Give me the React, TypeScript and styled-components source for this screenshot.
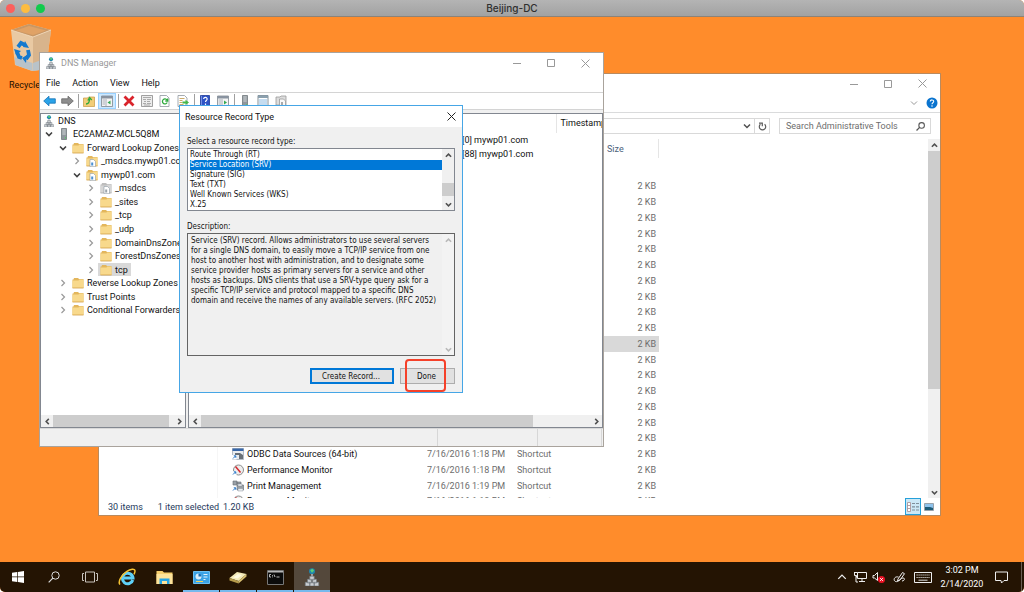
import React from "react";
import styled, { createGlobalStyle, css } from "styled-components";

const UI = 'Roboto, "Open Sans", sans-serif';
const DIALOG = '"DejaVu Sans Condensed", "DejaVu Sans", sans-serif';

const Global = createGlobalStyle`
  *, *::before, *::after { box-sizing: border-box; }
  body { margin: 0; background: #fff; font: 9px/12px ${UI}; color: #111; }
  button, input, select, textarea { font: inherit; color: inherit; margin: 0; padding: 0; }
  button { background: none; border: 0; }
  svg { display: block; flex: none; }
`;

const Screen = styled.div`
  min-height: 100vh;
  display: flex;
  flex-direction: column;
  border-radius: 5px;
  overflow: hidden;
  background: #ff8c2b;
`;

const MacBar = styled.header`
  height: 17px;
  display: grid;
  grid-template-columns: 1fr auto 1fr;
  align-items: center;
  background: linear-gradient(#b4b4b4, #a2a2a2);
  border-bottom: 1px solid #8d8378;
  font: 500 10px/14px Inter, sans-serif;
  color: #2f2f2f;
`;

const Lights = styled.div`
  display: flex;
  gap: 6px;
  padding-left: 6px;
`;

const Light = styled.button<{ $c: string }>`
  width: 9px;
  height: 9px;
  border-radius: 50%;
  background: ${(p) => p.$c};
`;

const Desktop = styled.main`
  flex: 1;
  position: relative;
  overflow: hidden;
`;

const Shortcut = styled.a`
  position: absolute;
  left: 6px;
  top: 6px;
  width: 52px;
  display: flex;
  flex-direction: column;
  align-items: center;
  gap: 6px;
  color: #1a0d00;
  text-decoration: none;
  white-space: nowrap;
`;

const Window = styled.section<{ $x: number; $y: number; $w: number; $h: number; $edge: string }>`
  position: absolute;
  left: ${(p) => p.$x}px;
  top: ${(p) => p.$y}px;
  width: ${(p) => p.$w}px;
  height: ${(p) => p.$h}px;
  display: flex;
  flex-direction: column;
  background: #fff;
  border: 1px solid ${(p) => p.$edge};
`;

const TitleBar = styled.div<{ $h: number }>`
  height: ${(p) => p.$h}px;
  flex: none;
  display: flex;
  align-items: center;
  padding: 0 1px 0 5px;
  background: #fff;
`;

const Caption = styled.h2<{ $dark?: boolean; $icon?: boolean }>`
  flex: 1;
  margin: 0;
  padding-left: ${(p) => (p.$icon ? 4 : 0)}px;
  font: inherit;
  color: ${(p) => (p.$dark ? "#111" : "#999")};
`;

const CaptionButton = styled.button<{ $w?: number }>`
  width: ${(p) => p.$w ?? 34}px;
  height: 20px;
  display: grid;
  place-items: center;
`;

/* Explorer */

const RibbonRow = styled.div`
  height: 20px;
  flex: none;
  display: flex;
  justify-content: flex-end;
  align-items: center;
  gap: 8px;
  padding-right: 2px;
  border-bottom: 1px solid #dadbdc;
`;

const AddressRow = styled.div`
  height: 26px;
  flex: none;
  display: flex;
  align-items: center;
  gap: 9px;
  padding: 0 9px;
`;

const AddressBox = styled.div`
  flex: 1;
  height: 16px;
  display: flex;
  justify-content: flex-end;
  border: 1px solid #d9d9d9;
`;

const AddressButton = styled.button<{ $line?: boolean }>`
  width: 15px;
  display: grid;
  place-items: center;
  ${(p) => p.$line && css`border-left: 1px solid #d9d9d9;`}
`;

const SearchBox = styled.label`
  width: 152px;
  height: 16px;
  display: flex;
  align-items: center;
  padding: 0 5px 0 6px;
  border: 1px solid #d9d9d9;
`;

const SearchInput = styled.input`
  flex: 1;
  min-width: 0;
  border: 0;
  outline: 0;
  background: none;
  &::placeholder { color: #6d6d6d; opacity: 1; }
`;

const ExplorerBody = styled.div`
  flex: 1;
  min-height: 0;
  display: flex;
`;

const NavPane = styled.div`
  width: 119px;
  border-right: 1px solid #f6f6f6;
`;

const FilesPane = styled.div`
  flex: 1;
  overflow: hidden;
`;

const Files = styled.table`
  width: 441px;
  border-collapse: collapse;
  table-layout: fixed;
  color: #6d6d6d;
  white-space: nowrap;
  td, th { padding: 0; text-align: left; font-weight: 400; line-height: 12px; overflow: hidden; }
  th { height: 39px; padding-bottom: 20px; color: #4c607a; }
  td:last-child { text-align: right; padding-right: 3px; }
`;

const SizeHead = styled.div`
  height: 19px;
  padding: 4px 0 0 5px;
  border-right: 1px solid #e5e5e5;
`;

const FileRow = styled.tr<{ $selected?: boolean; $h: number }>`
  height: ${(p) => p.$h}px;
  background: ${(p) => (p.$selected ? "#d9d9d9" : "none")};
`;

const FileName = styled.div`
  display: flex;
  align-items: center;
  gap: 3px;
  padding-left: 14px;
  color: #111;
`;

const ExplorerStatus = styled.footer`
  height: 17px;
  flex: none;
  display: flex;
  align-items: center;
  padding: 0 3px 0 9px;
  color: #1e395b;
`;

const StatusText = styled.span<{ $r: number }>`
  padding-right: ${(p) => p.$r}px;
`;

const ViewButton = styled.button<{ $on?: boolean }>`
  width: 16px;
  height: 17px;
  display: grid;
  place-items: center;
  ${(p) => p.$on && css`background: #cbe8f6; border: 1px solid #26a0da;`}
`;

/* Scroll bars */

const ScrollTrack = styled.div<{ $across?: boolean; $w?: number; $bg?: string }>`
  display: flex;
  flex: none;
  flex-direction: ${(p) => (p.$across ? "row" : "column")};
  ${(p) => (p.$across ? css`height: 12px;` : css`width: ${p.$w ?? 12}px;`)}
  background: ${(p) => p.$bg ?? "#f0f0f0"};
`;

const ScrollButton = styled.button`
  width: 12px;
  height: 12px;
  flex: none;
  display: grid;
  place-items: center;
`;

const Thumb = styled.div<{ $size: number }>`
  flex: 0 0 ${(p) => p.$size}px;
  background: #cdcdcd;
`;

const Gap = styled.div<{ $size?: number }>`
  flex: ${(p) => (p.$size === undefined ? "1" : `0 0 ${p.$size}px`)};
`;

/* DNS console */

const MenuBar = styled.nav`
  height: 20px;
  flex: none;
  display: flex;
  align-items: center;
  gap: 12px;
  padding-left: 6px;
  border-bottom: 1px solid #d4d4d4;
`;

const ToolBar = styled.div`
  height: 17px;
  flex: none;
  display: flex;
  align-items: center;
  border-bottom: 1px solid #d4d4d4;
`;

const ToolButton = styled.button<{ $on?: boolean }>`
  width: 18px;
  height: 16px;
  display: grid;
  place-items: center;
  ${(p) => p.$on && css`background: #cce8ff; border: 1px solid #99d1ff;`}
`;

const ToolRule = styled.span`
  width: 1px;
  height: 14px;
  margin: 0 1px 0 2px;
  background: #a0a0a0;
`;

const Panes = styled.div`
  flex: 1;
  min-height: 0;
  display: flex;
  gap: 2px;
  padding-top: 3px;
  background: #f0f0f0;
`;

const Pane = styled.div<{ $w?: number }>`
  ${(p) => (p.$w ? css`width: ${p.$w}px;` : css`flex: 1; min-width: 0;`)}
  display: flex;
  flex-direction: column;
  background: #fff;
  border: 1px solid #828790;
`;

const Tree = styled.ul`
  margin: 0;
  padding: 0;
  list-style: none;
  height: 203px;
  flex: none;
  display: flex;
  flex-direction: column;
`;

const TreeRow = styled.li<{ $depth: number }>`
  flex: 1;
  min-height: 0;
  display: flex;
  align-items: center;
  padding-left: ${(p) => p.$depth * 14}px;
  overflow: hidden;
  white-space: nowrap;
`;

const Twist = styled.button`
  width: 15px;
  height: 12px;
  flex: none;
  display: grid;
  place-items: center;
`;

const TreeItem = styled.span<{ $selected?: boolean }>`
  height: 14px;
  display: flex;
  align-items: center;
  gap: 3px;
  padding: 0 3px 0 2px;
  background: ${(p) => (p.$selected ? "#d9d9d9" : "none")};
`;

const Records = styled.table`
  width: 100%;
  border-collapse: collapse;
  table-layout: fixed;
  white-space: nowrap;
  td, th { padding: 0; height: 14px; line-height: 14px; text-align: left; font-weight: 400; overflow: hidden; }
  th { height: 19px; line-height: 19px; }
  th:last-child { padding-left: 4px; border-left: 1px solid #e5e5e5; }
  td:first-child { padding-left: 273px; }
`;

const ConsoleStatus = styled.footer`
  height: 18px;
  flex: none;
  display: flex;
  justify-content: flex-end;
  background: #f0f0f0;
  border-top: 1px solid #d9d9d9;
`;

const StatusCell = styled.span<{ $w: number }>`
  width: ${(p) => p.$w}px;
  border-left: 1px solid #d7d7d7;
`;

/* Record type dialog */

const DialogBody = styled.div`
  flex: 1;
  display: flex;
  flex-direction: column;
  padding: 9px 7px 0;
  background: #f0f0f0;
  font: 8px/12px ${DIALOG};
`;

const FieldLabel = styled.label`
  height: 12px;
`;

const ListFrame = styled.div<{ $h: number; $dark?: boolean }>`
  height: ${(p) => p.$h}px;
  display: flex;
  margin-bottom: ${(p) => (p.$dark ? 12 : 10)}px;
  border: 1px solid ${(p) => (p.$dark ? "#646464" : "#828790")};
  background: ${(p) => (p.$dark ? "#f0f0f0" : "#fff")};
  line-height: 10px;
`;

const TypeList = styled.select`
  flex: 1;
  height: 61px;
  padding: 1px 0 0 2px;
  border: 0;
  outline: 0;
  overflow: hidden;
  background: #fff;
  option { height: 10px; min-height: 10px; line-height: 10px; padding: 0; }
  option:checked { background: linear-gradient(#0078d7, #0078d7); color: #fff; }
`;

const Description = styled.textarea`
  flex: 1;
  min-width: 0;
  padding: 2px 0 0 3px;
  border: 0;
  outline: 0;
  resize: none;
  overflow: hidden;
  white-space: pre;
  background: none;
`;

const Actions = styled.div`
  display: flex;
  justify-content: flex-end;
  gap: 6px;
`;

const PushButton = styled.button<{ $w: number; $default?: boolean }>`
  width: ${(p) => p.$w}px;
  height: 16px;
  padding: 1px 2px 0 0;
  background: #e1e1e1;
  border: ${(p) => (p.$default ? "2px solid #0078d7" : "1px solid #adadad")};
  line-height: 12px;
  position: relative;
`;

const Marker = styled.span`
  position: absolute;
  left: 4px;
  top: -10px;
  width: 41px;
  height: 33px;
  border: 2px solid #f5412a;
  border-radius: 4px;
`;

/* Task bar */

const TaskBar = styled.footer`
  height: 30px;
  flex: none;
  display: flex;
  background: #241403;
  color: #fff;
`;

const TaskButton = styled.button<{ $state?: "running" | "active" }>`
  width: 36px;
  height: 30px;
  display: grid;
  place-items: center;
  ${(p) => p.$state && css`box-shadow: inset 0 -2px #76b9ed;`}
  ${(p) => p.$state === "active" && css`background: #54483b;`}
`;

const Apps = styled.div`
  display: flex;
  gap: 1px;
  margin-left: 1px;
  flex: 1;
`;

const Tray = styled.div`
  display: flex;
  align-items: center;
`;

const TrayButton = styled.button<{ $w: number }>`
  width: ${(p) => p.$w}px;
  height: 30px;
  display: grid;
  place-items: center;
`;

const Clock = styled.time`
  width: 54px;
  text-align: center;
  line-height: 14px;
`;

const ShowDesktop = styled.button`
  width: 3px;
  height: 30px;
  margin-left: 8px;
  border-left: 1px solid #6a5f54;
`;

/* Icons */

const Chevron = ({ dir, c = "#505050", s = 7, w = 1.5 }: { dir: "up" | "down" | "left" | "right"; c?: string; s?: number; w?: number }) => {
  const turn = { down: 0, left: 90, up: 180, right: 270 }[dir];
  return (
    <svg width={s} height={s} viewBox="0 0 8 8">
      <path d="M1 2.500 4 5.500 7 2.500" fill="none" stroke={c} strokeWidth={w} transform={`rotate(${turn} 4 4)`} />
    </svg>
  );
};

const Cross = ({ c }: { c: string }) => (
  <svg width="9" height="9" viewBox="0 0 9 9"><path d="M.5.5l8 8M8.500.5l-8 8" stroke={c} fill="none" /></svg>
);

const WindowButtons = () => (
  <>
    <CaptionButton aria-label="Minimize"><svg width="8" height="8"><path d="M0 4.500h8" stroke="#999" /></svg></CaptionButton>
    <CaptionButton aria-label="Maximize"><svg width="8" height="8"><path d="M.5.5h7v7h-7z" stroke="#999" fill="none" /></svg></CaptionButton>
    <CaptionButton aria-label="Close"><Cross c="#999" /></CaptionButton>
  </>
);

const RecycleBin = () => (
  <svg width="46" height="50" viewBox="0 0 46 50">
    <path d="M2 7 20 1l22 6-5 39-14 2-17-6z" fill="#e9c9a3" />
    <path d="M2 7 20 1l22 6-18 7z" fill="#c99765" />
    <path d="M7 7.500 20 3l17 4.500-13 4.500z" fill="#e0a266" />
    <path d="M24 14 42 7l-5 39-13 2z" fill="#d8b48c" />
    <path d="M5.500 34l18 6v8l-17-6zM24 40l14-5-1 11-13 2z" fill="#b9c3c9" />
    <path d="M2 7l22 7 18-7" fill="none" stroke="#f3dcc0" strokeWidth=".8" />
    <g fill="none" stroke="#1479cf" strokeWidth="3.800">
      <path d="M9 24l3-4 4 2M8 29l2 5 3 1M19 27l1 5-3 4" />
    </g>
    <path d="M16 18l4 7-6-1zM5 26l7 2-5 4zM18 32l-1 8-4-5z" fill="#1479cf" />
  </svg>
);

const DnsIcon = ({ s = 12 }: { s?: number }) => (
  <svg width={s} height={s} viewBox="0 0 12 12">
    <circle cx="6" cy="2.200" r="2" fill="#1f86ad" />
    <path d="M4.800 1.500l1.400-1 1.200 1.200-1.400 1.500z" fill="#58cf78" />
    <path d="M6 4v3" stroke="#bbb" />
    <path d="M4.500 5.500h3V8h-3zM3 7.500h2.700V10H3zM6.300 7.500H9V10H6.300zM1.500 9.500h3V12h-3zM4.600 9.500h2.800V12H4.600zM7.500 9.500h3V12h-3z" fill="#c9cdd1" stroke="#6d757c" strokeWidth=".4" />
  </svg>
);

const ServerIcon = () => (
  <svg width="12" height="12" viewBox="0 0 12 12">
    <path d="M3.500.5h5v11h-5z" fill="#8f979c" stroke="#666e73" strokeWidth=".7" />
    <path d="M4.300 2h3.400M4.300 4h3.400M4.300 6h3.400" stroke="#e3e6e8" strokeWidth=".8" />
    <path d="M7 9h1v1.500H7z" fill="#5ac46a" />
  </svg>
);

const FolderIcon = ({ page, grey }: { page?: boolean; grey?: boolean }) => (
  <svg width="12" height="12" viewBox="0 0 12 12">
    <path d="M.5 2.500V11h11V2H7L6 1H2L1.500 2.500z" fill={grey ? "#bdbdbd" : "#e3b65c"} />
    <path d="M.5 3.500h6l.8-1h4.200V11H.5z" fill={grey ? "#d6d6d6" : "#f8d98c"} />
    <path d="M.5 11h11" stroke={grey ? "#aaa" : "#d29f45"} strokeWidth=".8" />
    {page && (
      <>
        <path d="M4 4.500h3.500L9.500 6.500v5.200H4z" fill="#fff" stroke="#8c98a3" strokeWidth=".6" />
        <path d="M5.200 7.500h2v3h-2z" fill={grey ? "#9aa3aa" : "#4b92d4"} />
      </>
    )}
  </svg>
);

const ArrowIcon = ({ back }: { back?: boolean }) => (
  <svg width="13" height="12" viewBox="0 0 13 12">
    <path
      d="M.7 6 6 1.200v2.600h6.300v4.400H6v2.600z"
      fill={back ? "#2aa3e8" : "#8e8e8e"}
      stroke={back ? "#1574b8" : "#666"}
      strokeWidth=".8"
      transform={back ? undefined : "rotate(180 6.5 6)"}
    />
  </svg>
);

const UpFolderIcon = () => (
  <svg width="12" height="12" viewBox="0 0 12 12">
    <path d="M.5 3h4l1-1h6v9.500H.5z" fill="#f2cd78" stroke="#c79a42" strokeWidth=".7" />
    <path d="M3 9c3 0 3.500-2 3.500-5M4.800 5.500 6.600 2.500 8.700 5" fill="none" stroke="#2eaa3c" strokeWidth="1.300" />
  </svg>
);

const PanelIcon = ({ arrow }: { arrow?: boolean }) => (
  <svg width="12" height="12" viewBox="0 0 12 12">
    <path d="M.5 1h11v10.500H.5z" fill="#f4f4f4" stroke="#7d868e" strokeWidth=".8" />
    <path d="M.5 1h11v2.500H.5z" fill="#8993a0" />
    <path d="M1.500 5h2.500M1.500 7h2.500M1.500 9h2.500M5 4v7" stroke="#8993a0" strokeWidth=".7" />
    <path d={arrow ? "M9.500 5.500v4L6.500 7.500z" : "M7 5.500v4l3-2z"} fill="#35a853" />
  </svg>
);

const DeleteIcon = () => (
  <svg width="12" height="12" viewBox="0 0 12 12"><path d="M1.500 1.500l9 9M10.500 1.500l-9 9" stroke="#d9232b" strokeWidth="2.800" /></svg>
);

const PropsIcon = () => (
  <svg width="12" height="12" viewBox="0 0 12 12">
    <path d="M.5.5h11v11H.5z" fill="#ececec" stroke="#8a8a8a" strokeWidth=".8" />
    <path d="M2 2.500h8M2 4.500h3m1 0h4M3 6.500h2m1 0h3M2 8.500h3m1 0h4M3 10h6" stroke="#9a9a9a" strokeWidth=".8" />
  </svg>
);

const PageIcon = ({ kind }: { kind: "refresh" | "export" }) => (
  <svg width="12" height="12" viewBox="0 0 12 12">
    <path d="M1 .5h6.500L10 3v8.500H1z" fill="#fff" stroke="#8f979e" strokeWidth=".8" />
    {kind === "refresh" ? (
      <path d="M8 5a2.500 2.500 0 1 0 .2 2.500M8.700 3.500V6H6.300" fill="none" stroke="#2eaa3c" strokeWidth="1.300" />
    ) : (
      <>
        <path d="M2.500 3.500h5M2.500 5.500h3M2.500 7.500h3M2.500 9.500h4" stroke="#c6a257" strokeWidth=".9" />
        <path d="M5.500 6.500h3V4.800L12 7.500 8.500 10V8.500h-3z" fill="#46b84a" />
      </>
    )}
  </svg>
);

const HelpBook = () => (
  <svg width="12" height="12" viewBox="0 0 12 12">
    <path d="M1.500.5h9v11h-9z" fill="#2e53c5" stroke="#1d3a97" strokeWidth=".8" />
    <path d="M2.500.8v10.400" stroke="#86a0ee" strokeWidth=".8" />
    <path d="M4.700 4c0-2.200 3.600-2 3.400.2C8 5.500 6.500 5.500 6.500 7M6.500 8.500V10" fill="none" stroke="#fff" strokeWidth="1.200" />
  </svg>
);

const ListIcon = () => (
  <svg width="12" height="12" viewBox="0 0 12 12">
    <path d="M1 .5h10v11H1z" fill="#fff" stroke="#64747f" strokeWidth=".8" />
    <path d="M1 .5h10V3H1z" fill="#8ba0ae" />
    <path d="M2 5h8M2 7h8M2 9h8" stroke="#6da7d8" strokeWidth=".8" />
  </svg>
);

const StackIcon = () => (
  <svg width="12" height="12" viewBox="0 0 12 12">
    <path d="M1 2h4l1-1h5v9H1z" fill="#ddd" stroke="#999" strokeWidth=".8" />
    <path d="M4.500 4h4l2 2v5.500h-6z" fill="#f8f8f8" stroke="#999" strokeWidth=".8" />
    <path d="M6 7h2v3H6z" fill="#aaa" />
  </svg>
);

const Magnifier = ({ c, s, w = 1 }: { c: string; s: number; w?: number }) => (
  <svg width={s} height={s} viewBox="0 0 12 12">
    <circle cx="7.500" cy="4.500" r="3.700" fill="none" stroke={c} strokeWidth={w} />
    <path d="M4.800 7.200.7 11.300" stroke={c} strokeWidth={w * 1.2} />
  </svg>
);

const ReloadIcon = () => (
  <svg width="9" height="9" viewBox="0 0 9 9">
    <path d="M2.400 2.300a3.200 3.200 0 1 0 4.200 0M1 1.200h3.300v3" fill="none" stroke="#5c5c5c" strokeWidth="1.200" />
  </svg>
);

const HelpDot = () => (
  <svg width="12" height="12" viewBox="0 0 12 12">
    <circle cx="6" cy="6" r="5.500" fill="#0a74cf" />
    <path d="M4.300 4.500c0-2.200 3.600-2 3.400 0C7.600 5.800 6 5.700 6 7.200M6 8.300v1.400" fill="none" stroke="#fff" strokeWidth="1.100" />
  </svg>
);

const LinkBadge = () => (
  <>
    <path d="M0 7h4.500v4.500H0z" fill="#fff" />
    <path d="M1 10.500l2.500-2.500M1.800 7.800h2v2" stroke="#2474c6" fill="none" />
  </>
);

const OdbcIcon = () => (
  <svg width="12" height="12" viewBox="0 0 12 12">
    <path d="M.5.5h11v11H.5z" fill="#e8ecf0" stroke="#8896a5" strokeWidth=".6" />
    <path d="M.5.5h11V3H.5z" fill="#3867a8" />
    <path d="M3 5h5l3 2v4H7V7H3z" fill="#687078" />
    <LinkBadge />
  </svg>
);

const GaugeIcon = () => (
  <svg width="12" height="12" viewBox="0 0 12 12">
    <circle cx="6.500" cy="6" r="5" fill="#eee" stroke="#8b8b8b" />
    <path d="M3.500 2.500l5 6" stroke="#d42a2f" strokeWidth="1.500" />
    <LinkBadge />
  </svg>
);

const PrinterIcon = () => (
  <svg width="12" height="12" viewBox="0 0 12 12">
    <path d="M1 1h4v4H1zM5 2h4v2H5zM5 5h6.500v5H5z" fill="#9aa1a7" stroke="#656d73" strokeWidth=".6" />
    <path d="M6 4h4v2H6zM6 8.500h5V11H6z" fill="#e9edf0" stroke="#79828a" strokeWidth=".4" />
    <LinkBadge />
  </svg>
);

const WindowsLogo = () => (
  <svg width="12" height="12" viewBox="0 0 12 12"><path d="M0 1.700 5.200 1v4.600H0zM5.900.9 12 0v5.600H5.900zM0 6.300h5.200V11L0 10.300zM5.900 6.300H12V12l-6.100-.9z" fill="#fff" /></svg>
);

const TaskViewIcon = () => (
  <svg width="16" height="12" viewBox="0 0 16 12"><path d="M3.500 1h9v10h-9zM2 2.500H.5v7H2M14 2.500h1.500v7H14" fill="none" stroke="#c9c4be" /></svg>
);

const IeIcon = () => (
  <svg width="18" height="18" viewBox="0 0 18 18">
    <path d="M14.800 12A5.300 5.300 0 1 1 15 10H6" fill="none" stroke="#5fd0f7" strokeWidth="3" />
    <path d="M2 16.500C-.5 14 3.500 7 8.500 3.700 12.500 1 17 .3 17 3c0 1.500-.6 2.500-1 3.300" fill="none" stroke="#f5c232" strokeWidth="1.500" />
  </svg>
);

const ExplorerIcon = () => (
  <svg width="17" height="15" viewBox="0 0 17 15">
    <path d="M.5 1h6l1.500 1.500h8.500V14H.5z" fill="#f6cf6d" />
    <path d="M.5 4h16v10H.5z" fill="#fde39b" />
    <path d="M3.500 14V8.500h10V14H11v-3H6v3z" fill="#27a5e5" />
  </svg>
);

const ControlIcon = () => (
  <svg width="17" height="13" viewBox="0 0 17 13">
    <path d="M.5.5h16v12H.5z" fill="#3ba3e6" stroke="#6cc0f3" />
    <circle cx="5.500" cy="5.500" r="3" fill="#d9effc" />
    <path d="M5.500 5.500v-3a3 3 0 0 1 3 3z" fill="#1b6fb5" />
    <path d="M10.500 3.500h4M10.500 6h4M10.500 8.500h2" stroke="#e4f4fe" />
    <path d="M3 10.500h7" stroke="#f2d35b" />
  </svg>
);

const DriveIcon = () => (
  <svg width="18" height="13" viewBox="0 0 18 13">
    <path d="M.5 7 8 1l9.500 2-8 7z" fill="#f5ebb8" />
    <path d="M.5 7l9 3v2.500l-9-3z" fill="#b59a4a" />
    <path d="M9.500 10l8-7v2.500l-8 7z" fill="#d8bf70" />
    <path d="M4 6.500 9 3l4 1-4.500 3.500z" fill="#fffbe2" />
  </svg>
);

const TerminalIcon = () => (
  <svg width="17" height="15" viewBox="0 0 17 15">
    <path d="M.5.5h16v14H.5z" fill="#0b0b0b" stroke="#777" />
    <path d="M1 1h15v1.500H1z" fill="#b8b8b8" />
    <path d="M4 4.500H2.500V7H4M5.500 5v.8M5.500 6.500v.8M7 4.500l1 2.500M9.500 7h3" stroke="#e5e5e5" strokeWidth=".8" fill="none" />
  </svg>
);

const NetworkIcon = () => (
  <svg width="13" height="12" viewBox="0 0 13 12"><path d="M3.500 1.500h9v6h-9zM8 7.500v3M5 10.500h6M.5 1.500h3M.5 1v3.500h2v2M2 4.500V11h2" fill="none" stroke="#eee" /></svg>
);

const SpeakerIcon = () => (
  <svg width="14" height="13" viewBox="0 0 14 13">
    <path d="M1 4.500h1.500L5.500 1.500v8L2.500 7H1z" fill="none" stroke="#eee" />
    <circle cx="9.500" cy="8.500" r="3.500" fill="#e81123" />
    <path d="M8.200 7.200l2.600 2.600M10.800 7.200 8.200 9.800" stroke="#fff" />
  </svg>
);

const PenIcon = () => (
  <svg width="14" height="13" viewBox="0 0 14 13">
    <path d="M5 8 9.500 1.500l2 1.200L7 9l-2.500 1zM5.500 6C1 5 0 9.500 2.500 10.500c3 1 5-3.500 7.500-3.500s1.500 3-1 3" fill="none" stroke="#eee" />
  </svg>
);

const KeyboardIcon = () => (
  <svg width="18" height="11" viewBox="0 0 18 11">
    <path d="M.5.5h17v10H.5z" fill="none" stroke="#eee" />
    <path d="M2.500 3h13M2.500 5.500h13" stroke="#ddd" strokeWidth="1.200" strokeDasharray="1.200 .8" />
    <path d="M4.500 8.200h9" stroke="#ddd" />
  </svg>
);

const NoticeIcon = () => (
  <svg width="13" height="13" viewBox="0 0 13 13"><path d="M.5 1h12v8.500H9L6.500 12 6 9.500H.5z" fill="none" stroke="#eee" /></svg>
);

const DetailsIcon = () => (
  <svg width="12" height="10" viewBox="0 0 12 10">
    <path d="M.5.5h3v9h-3zM.5 3.500h3M.5 6.500h3" fill="#fff" stroke="#a58a8f" strokeWidth=".8" />
    <path d="M5 1.500h3M9 1.500h3M5 4.800h3M9 4.800h3M5 8h3M9 8h3" stroke="#7f8f9a" strokeWidth="1.200" />
  </svg>
);

const ThumbIcon = () => (
  <svg width="10" height="8" viewBox="0 0 10 8">
    <path d="M.5.5h9v7h-9z" fill="#8fc3ec" stroke="#98a2ab" />
    <path d="M1 4h5l3 1v2H1z" fill="#1d5c78" />
  </svg>
);

/* Data */

type Node = { depth: number; label: string; open?: boolean; kind?: "dns" | "server" | "zone" | "grey"; selected?: boolean };

const nodes: Node[] = [
  { depth: -1, label: "DNS", kind: "dns" },
  { depth: 0, label: "EC2AMAZ-MCL5Q8M", open: true, kind: "server" },
  { depth: 1, label: "Forward Lookup Zones", open: true },
  { depth: 2, label: "_msdcs.mywp01.com", kind: "zone" },
  { depth: 2, label: "mywp01.com", open: true, kind: "zone" },
  { depth: 3, label: "_msdcs", kind: "grey" },
  { depth: 3, label: "_sites" },
  { depth: 3, label: "_tcp" },
  { depth: 3, label: "_udp" },
  { depth: 3, label: "DomainDnsZones" },
  { depth: 3, label: "ForestDnsZones" },
  { depth: 3, label: "tcp", selected: true },
  { depth: 1, label: "Reverse Lookup Zones" },
  { depth: 1, label: "Trust Points" },
  { depth: 1, label: "Conditional Forwarders" },
];

const NodeIcon = ({ kind }: { kind: Node["kind"] }) => {
  if (kind === "dns") return <DnsIcon />;
  if (kind === "server") return <ServerIcon />;
  return <FolderIcon page={kind === "zone" || kind === "grey"} grey={kind === "grey"} />;
};

const namedFiles = [
  { icon: <OdbcIcon />, name: "ODBC Data Sources (64-bit)", date: "7/16/2016 1:18 PM" },
  { icon: <GaugeIcon />, name: "Performance Monitor", date: "7/16/2016 1:18 PM" },
  { icon: <PrinterIcon />, name: "Print Management", date: "7/16/2016 1:19 PM" },
  { icon: <GaugeIcon />, name: "Resource Monitor", date: "7/16/2016 1:18 PM" },
];

const fileRows = Array.from({ length: 21 }, (_, i) => ({
  file: namedFiles[i - 17],
  selected: i === 10,
  height: i % 4 === 3 ? 15 : 16,
}));

const recordTypes = ["Route Through (RT)", "Service Location (SRV)", "Signature (SIG)", "Text (TXT)", "Well Known Services (WKS)", "X.25"];

const description = `Service (SRV) record. Allows administrators to use several servers
for a single DNS domain, to easily move a TCP/IP service from one
host to another host with administration, and to designate some
service provider hosts as primary servers for a service and other
hosts as backups. DNS clients that use a SRV-type query ask for a
specific TCP/IP service and protocol mapped to a specific DNS
domain and receive the names of any available servers. (RFC 2052)`;

const Explorer = () => (
  <Window $x={98} $y={56} $w={843} $h={443} $edge="#b98a5e">
    <TitleBar $h={19}>
      <Caption />
      <WindowButtons />
    </TitleBar>
    <RibbonRow>
      <button aria-label="Expand ribbon"><Chevron dir="down" c="#999" s={8} w={1} /></button>
      <button aria-label="Help"><HelpDot /></button>
    </RibbonRow>
    <AddressRow>
      <AddressBox>
        <AddressButton aria-label="Previous locations"><Chevron dir="down" s={8} /></AddressButton>
        <AddressButton aria-label="Refresh" $line><ReloadIcon /></AddressButton>
      </AddressBox>
      <SearchBox>
        <SearchInput placeholder="Search Administrative Tools" aria-label="Search Administrative Tools" />
        <Magnifier c="#555" s={9} w={1.4} />
      </SearchBox>
    </AddressRow>
    <ExplorerBody>
      <NavPane />
      <FilesPane>
        <Files>
          <colgroup><col width="209" /><col width="90" /><col width="85" /><col width="57" /></colgroup>
          <thead><tr><th /><th /><th /><th><SizeHead>Size</SizeHead></th></tr></thead>
          <tbody>
            {fileRows.map((r, i) => (
              <FileRow key={i} $selected={r.selected} $h={r.height}>
                <td>{r.file && <FileName>{r.file.icon}{r.file.name}</FileName>}</td>
                <td>{r.file?.date}</td>
                <td>{r.file && "Shortcut"}</td>
                <td>2 KB</td>
              </FileRow>
            ))}
          </tbody>
        </Files>
      </FilesPane>
      <ScrollTrack $w={12}>
        <ScrollButton aria-label="Scroll up"><Chevron dir="up" w={1.8} /></ScrollButton>
        <Thumb $size={238} />
        <Gap />
        <ScrollButton aria-label="Scroll down"><Chevron dir="down" w={1.8} /></ScrollButton>
      </ScrollTrack>
    </ExplorerBody>
    <ExplorerStatus>
      <StatusText $r={15}>30 items</StatusText>
      <StatusText $r={4}>1 item selected</StatusText>
      <StatusText $r={0}>1.20 KB</StatusText>
      <Gap />
      <ViewButton $on aria-label="Details view"><DetailsIcon /></ViewButton>
      <ViewButton aria-label="Large icons view"><ThumbIcon /></ViewButton>
    </ExplorerStatus>
  </Window>
);

const DnsManager = () => (
  <Window $x={39} $y={35} $w={565} $h={395} $edge="#a9a39c">
    <TitleBar $h={20}>
      <DnsIcon />
      <Caption $icon>DNS Manager</Caption>
      <WindowButtons />
    </TitleBar>
    <MenuBar>
      <button>File</button><button>Action</button><button>View</button><button>Help</button>
    </MenuBar>
    <ToolBar>
      <ToolButton aria-label="Back"><ArrowIcon back /></ToolButton>
      <ToolButton aria-label="Forward"><ArrowIcon /></ToolButton>
      <ToolRule />
      <ToolButton aria-label="Up one level"><UpFolderIcon /></ToolButton>
      <ToolButton aria-label="Show console tree" $on><PanelIcon arrow /></ToolButton>
      <ToolRule />
      <ToolButton aria-label="Delete"><DeleteIcon /></ToolButton>
      <ToolButton aria-label="Properties"><PropsIcon /></ToolButton>
      <ToolButton aria-label="Refresh"><PageIcon kind="refresh" /></ToolButton>
      <ToolButton aria-label="Export list"><PageIcon kind="export" /></ToolButton>
      <ToolRule />
      <ToolButton aria-label="Help"><HelpBook /></ToolButton>
      <ToolButton aria-label="Show action pane"><PanelIcon /></ToolButton>
      <ToolRule />
      <ToolButton aria-label="New server"><ServerIcon /></ToolButton>
      <ToolButton aria-label="Filter"><ListIcon /></ToolButton>
      <ToolButton aria-label="New zone"><StackIcon /></ToolButton>
    </ToolBar>
    <Panes>
      <Pane $w={146}>
        <Tree>
          {nodes.map((n) => (
            <TreeRow key={n.label} $depth={Math.max(n.depth, 0)}>
              {n.depth >= 0 && (
                <Twist aria-label={`Toggle ${n.label}`}>
                  <Chevron dir={n.open ? "down" : "right"} c={n.open ? "#404040" : "#999"} s={8} w={n.open ? 1.6 : 1.2} />
                </Twist>
              )}
              <TreeItem $selected={n.selected}><NodeIcon kind={n.kind} />{n.label}</TreeItem>
            </TreeRow>
          ))}
        </Tree>
        <Gap />
        <ScrollTrack $across>
          <ScrollButton aria-label="Scroll left"><Chevron dir="left" w={1.8} /></ScrollButton>
          <Thumb $size={116} />
          <Gap />
          <ScrollButton aria-label="Scroll right"><Chevron dir="right" w={1.8} /></ScrollButton>
        </ScrollTrack>
      </Pane>
      <Pane>
        <Records>
          <colgroup><col /><col width="46" /></colgroup>
          <thead><tr><th /><th>Timestamp</th></tr></thead>
          <tbody>
            <tr><td>[0] mywp01.com</td><td /></tr>
            <tr><td>[88] mywp01.com</td><td /></tr>
          </tbody>
        </Records>
        <Gap />
        <ScrollTrack $across>
          <ScrollButton aria-label="Scroll left"><Chevron dir="left" w={1.8} /></ScrollButton>
          <Thumb $size={332} />
          <Gap />
          <ScrollButton aria-label="Scroll right"><Chevron dir="right" w={1.8} /></ScrollButton>
        </ScrollTrack>
      </Pane>
    </Panes>
    <ConsoleStatus>
      <StatusCell $w={100} />
      <StatusCell $w={64} />
      <StatusCell $w={2} />
    </ConsoleStatus>
  </Window>
);

const RecordDialog = () => (
  <Window $x={179} $y={88} $w={284} $h={288} $edge="#46a6e6" role="dialog" aria-label="Resource Record Type">
    <TitleBar $h={21}>
      <Caption $dark>Resource Record Type</Caption>
      <CaptionButton $w={20} aria-label="Close"><Cross c="#222" /></CaptionButton>
    </TitleBar>
    <DialogBody>
      <FieldLabel htmlFor="types">Select a resource record type:</FieldLabel>
      <ListFrame $h={63}>
        <TypeList id="types" size={6} defaultValue="Service Location (SRV)">
          {recordTypes.map((t) => <option key={t}>{t}</option>)}
        </TypeList>
        <ScrollTrack>
          <ScrollButton aria-label="Scroll up"><Chevron dir="up" w={1.8} /></ScrollButton>
          <Gap />
          <Thumb $size={13} />
          <Gap $size={2} />
          <ScrollButton aria-label="Scroll down"><Chevron dir="down" w={1.8} /></ScrollButton>
        </ScrollTrack>
      </ListFrame>
      <FieldLabel htmlFor="about">Description:</FieldLabel>
      <ListFrame $h={123} $dark>
        <Description id="about" readOnly value={description} />
        <ScrollTrack $bg="#f3f3f3">
          <ScrollButton aria-label="Scroll up"><Chevron dir="up" c="#b8b8b8" w={1.8} /></ScrollButton>
          <Gap />
          <ScrollButton aria-label="Scroll down"><Chevron dir="down" c="#b8b8b8" w={1.8} /></ScrollButton>
        </ScrollTrack>
      </ListFrame>
      <Actions>
        <PushButton $w={84} $default>Create Record...</PushButton>
        <PushButton $w={55}>Done<Marker /></PushButton>
      </Actions>
    </DialogBody>
  </Window>
);

export default function App() {
  return (
    <>
      <Global />
      <Screen>
        <MacBar>
          <Lights>
            <Light $c="#fc605c" aria-label="Close" />
            <Light $c="#fdbc40" aria-label="Minimize" />
            <Light $c="#11cb4c" aria-label="Zoom" />
          </Lights>
          <span>Beijing-DC</span>
        </MacBar>
        <Desktop>
          <Shortcut href="#recycle"><RecycleBin />Recycle Bin</Shortcut>
          <Explorer />
          <DnsManager />
          <RecordDialog />
        </Desktop>
        <TaskBar>
          <TaskButton aria-label="Start"><WindowsLogo /></TaskButton>
          <TaskButton aria-label="Search"><Magnifier c="#ddd" s={12} /></TaskButton>
          <TaskButton aria-label="Task view"><TaskViewIcon /></TaskButton>
          <Apps>
            <TaskButton aria-label="Internet Explorer"><IeIcon /></TaskButton>
            <TaskButton aria-label="File Explorer"><ExplorerIcon /></TaskButton>
            <TaskButton aria-label="Control Panel" $state="running"><ControlIcon /></TaskButton>
            <TaskButton aria-label="Administrative Tools" $state="running"><DriveIcon /></TaskButton>
            <TaskButton aria-label="Command Prompt" $state="running"><TerminalIcon /></TaskButton>
            <TaskButton aria-label="DNS Manager" $state="active"><DnsIcon s={18} /></TaskButton>
          </Apps>
          <Tray>
            <TrayButton $w={18} aria-label="Hidden icons"><Chevron dir="up" c="#eee" s={10} w={1} /></TrayButton>
            <TrayButton $w={18} aria-label="Network"><NetworkIcon /></TrayButton>
            <TrayButton $w={20} aria-label="Volume"><SpeakerIcon /></TrayButton>
            <TrayButton $w={22} aria-label="Ink workspace"><PenIcon /></TrayButton>
            <TrayButton $w={24} aria-label="Touch keyboard"><KeyboardIcon /></TrayButton>
            <Clock>3:02 PM<br />2/14/2020</Clock>
            <TrayButton $w={24} aria-label="Notifications"><NoticeIcon /></TrayButton>
            <ShowDesktop aria-label="Show desktop" />
          </Tray>
        </TaskBar>
      </Screen>
    </>
  );
}
